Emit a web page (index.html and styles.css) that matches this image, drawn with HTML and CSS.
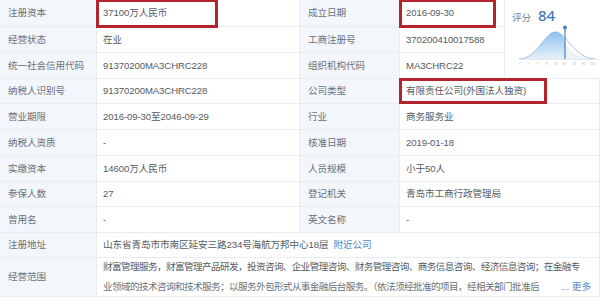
FILE: index.html
```html
<!DOCTYPE html>
<html lang="zh">
<head>
<meta charset="utf-8">
<link rel="stylesheet" href="styles.css">
</head>
<body>
<div class="table">
  <div class="cell label r1">注册资本</div>
  <div class="cell value r1 marked">37100万人民币<span class="mark mark-a"></span></div>
  <div class="cell label r1">成立日期</div>
  <div class="cell value r1 marked">2016-09-30<span class="mark mark-b"></span></div>
  <div class="cell score">
    <div class="score-head"><span class="score-label">评分</span><span class="score-num">84</span></div>
    <svg class="chart" width="94" height="52" viewBox="0 0 94 52">
      <defs>
        <linearGradient id="g" x1="0" y1="0" x2="0" y2="1">
          <stop offset="0" stop-color="#8fc0ec"/>
          <stop offset="1" stop-color="#e6f1fb"/>
        </linearGradient>
      </defs>
      <path d="M6,34 C24,34 32,7 42,7 C48,7 52,13 52,17 L52,34 Z" fill="url(#g)"/>
      <path d="M52,17 C56,26 64,33 82,34 L52,34 Z" fill="#eef1f5"/>
      <path d="M6,34 C24,34 32,7 42,7 C54,7 60,33 82,34" fill="none" stroke="#8db3d9" stroke-width="0.8"/>
      <line x1="6" y1="34.5" x2="86" y2="34.5" stroke="#dde3ea" stroke-width="0.8"/>
      <line x1="52" y1="2" x2="52" y2="34" stroke="#4d7fc4" stroke-width="1.2"/>
      <circle cx="52" cy="2.5" r="2" fill="#4d7fc4"/>
      <g class="ticks">
        <text x="6" y="40">0</text><text x="15" y="40">1</text><text x="24" y="40">3</text><text x="32" y="40">15</text><text x="41" y="40">35</text><text x="50" y="40">65</text><text x="60" y="40">87</text><text x="69" y="40">96</text><text x="77" y="40">100</text>
      </g>
    </svg>
  </div>

  <div class="cell label r2">经营状态</div>
  <div class="cell value r2">在业</div>
  <div class="cell label r2">工商注册号</div>
  <div class="cell value r2">370200410017588</div>

  <div class="cell label r3">统一社会信用代码</div>
  <div class="cell value r3">91370200MA3CHRC228</div>
  <div class="cell label r3">组织机构代码</div>
  <div class="cell value r3">MA3CHRC22</div>

  <div class="cell label r4">纳税人识别号</div>
  <div class="cell value r4">91370200MA3CHRC228</div>
  <div class="cell label r4">公司类型</div>
  <div class="cell value wide r4 marked">有限责任公司(外国法人独资)<span class="mark mark-c"></span></div>

  <div class="cell label r5">营业期限</div>
  <div class="cell value r5">2016-09-30至2046-09-29</div>
  <div class="cell label r5">行业</div>
  <div class="cell value wide r5">商务服务业</div>

  <div class="cell label r6">纳税人资质</div>
  <div class="cell value r6">-</div>
  <div class="cell label r6">核准日期</div>
  <div class="cell value wide r6">2019-01-18</div>

  <div class="cell label r7">实缴资本</div>
  <div class="cell value r7">14600万人民币</div>
  <div class="cell label r7">人员规模</div>
  <div class="cell value wide r7">小于50人</div>

  <div class="cell label r8">参保人数</div>
  <div class="cell value r8">27</div>
  <div class="cell label r8">登记机关</div>
  <div class="cell value wide r8">青岛市工商行政管理局</div>

  <div class="cell label r9">曾用名</div>
  <div class="cell value r9">-</div>
  <div class="cell label r9">英文名称</div>
  <div class="cell value wide r9">-</div>

  <div class="cell label r10">注册地址</div>
  <div class="cell value full r10">山东省青岛市市南区延安三路234号海航万邦中心18层<a class="link near">附近公司</a></div>

  <div class="cell label r11">经营范围</div>
  <div class="cell value full r11 scope">
    <div class="scope-line">财富管理服务，财富管理产品研发，投资咨询、企业管理咨询、财务管理咨询、商务信息咨询、经济信息咨询；在金融专</div>
    <div class="scope-line scope-last"><span class="scope-tail">业领域的技术咨询和技术服务；以服务外包形式从事金融后台服务。（依法须经批准的项目，经相关部门批准后</span><a class="link more">... 更多</a></div>
  </div>
</div>
</body>
</html>
```

FILE: styles.css
```css
html, body {
  margin: 0;
  padding: 0;
  background: #ffffff;
}

body {
  font-family: "Liberation Sans", "Noto Sans CJK SC", sans-serif;
  font-size: 9.6px;
  letter-spacing: -0.1px;
  color: #555b63;
  width: 600px;
  height: 303px;
  overflow: hidden;
}

.table {
  display: grid;
  grid-template-columns: 97px 203px 100px 105px 95px;
  grid-template-rows: 27px 26px 26px 25px 26px 26px 26px 25px 26px 25px 39px;
  width: 600px;
}

.cell {
  display: flex;
  align-items: center;
  border-bottom: 1px solid #e9edf2;
  border-right: 1px solid #e9edf2;
  box-sizing: border-box;
  white-space: nowrap;
  line-height: 14px;
}

.label {
  background: #f3f7fc;
  color: #6a7079;
  padding-left: 8px;
}

.value {
  padding-left: 6px;
  color: #555b63;
}

.wide { grid-column: 4 / 6; }
.full { grid-column: 2 / 6; }

.marked { position: relative; }

.mark {
  position: absolute;
  top: -1px;
  bottom: -2px;
  left: -1px;
  border: 3px solid #b3242c;
  box-sizing: border-box;
}
.mark-a { width: 122px; }
.mark-b { width: 97px; }
.mark-c { width: 148px; top: -1px; bottom: -1px; }

.score {
  grid-column: 5;
  grid-row: 1 / 4;
  flex-direction: column;
  align-items: flex-start;
  justify-content: flex-start;
  border-right: none;
  padding: 8px 0 0 7px;
}

.score-head {
  display: flex;
  align-items: baseline;
  gap: 7px;
  height: 17px;
}

.score-label {
  font-family: "Noto Sans CJK SC", sans-serif;
  font-size: 9.6px;
  color: #7b828c;
}

.score-num {
  font-family: "Noto Sans", sans-serif;
  font-size: 15px;
  font-weight: 500;
  letter-spacing: 0;
  color: #3f77be;
}

.chart {
  display: block;
  margin: 0 0 0 1px;
}

.ticks text {
  font-size: 3px;
  fill: #b6bcc4;
  font-family: "Noto Sans", sans-serif;
}

.link {
  color: #4f86c6;
  margin-left: 5px;
}

.scope {
  flex-direction: column;
  align-items: stretch;
  justify-content: center;
  padding-right: 8px;
  line-height: 20px;
}

.scope-line {
  letter-spacing: -0.6px;
  white-space: nowrap;
}

.scope-last {
  display: flex;
  align-items: center;
}

.scope-tail {
  flex: 1;
  min-width: 0;
  overflow: hidden;
  color: #6b7078;
}

.more {
  flex: none;
  margin-left: 6px;
  letter-spacing: 0;
}
```
